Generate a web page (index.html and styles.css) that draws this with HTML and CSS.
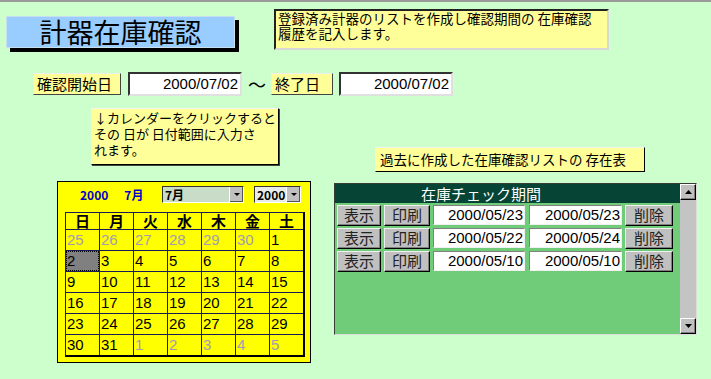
FILE: index.html
```html
<!DOCTYPE html>
<html lang="ja">
<head>
  <meta charset="UTF-8" />
  <title>計器在庫確認</title>
  <link rel="stylesheet" href="styles.css">
</head>
<body>
  <div class="top">
    <div class="title-box">計器在庫確認</div>
    <div class="note note-top">登録済み計器のリストを作成し確認期間の 在庫確認<br>履歴を記入します。</div>
  </div>

  <div class="dates">
    <div class="label label-start">確認開始日</div>
    <div class="field field-start">2000/07/02</div>
    <div class="wave">〜</div>
    <div class="label label-end">終了日</div>
    <div class="field field-end">2000/07/02</div>
  </div>

  <div class="main">
    <div class="left-col">
      <div class="hint">↓カレンダーをクリックすると<br>その 日が 日付範囲に入力さ<br>れます。</div>

      <div class="calendar">
        <div class="cal-head">
          <div class="cal-title"><span>2000</span><span>7月</span></div>
          <div class="combo combo-month"><span class="combo-text">7月</span><span class="combo-btn"></span></div>
          <div class="combo combo-year"><span class="combo-text">2000</span><span class="combo-btn"></span></div>
        </div>
        <div class="cal-grid">
          <div class="dow">日</div><div class="dow">月</div><div class="dow">火</div><div class="dow">水</div><div class="dow">木</div><div class="dow">金</div><div class="dow">土</div>
          <div class="day other">25</div><div class="day other">26</div><div class="day other">27</div><div class="day other">28</div><div class="day other">29</div><div class="day other">30</div><div class="day">1</div>
          <div class="day selected">2</div><div class="day">3</div><div class="day">4</div><div class="day">5</div><div class="day">6</div><div class="day">7</div><div class="day">8</div>
          <div class="day">9</div><div class="day">10</div><div class="day">11</div><div class="day">12</div><div class="day">13</div><div class="day">14</div><div class="day">15</div>
          <div class="day">16</div><div class="day">17</div><div class="day">18</div><div class="day">19</div><div class="day">20</div><div class="day">21</div><div class="day">22</div>
          <div class="day">23</div><div class="day">24</div><div class="day">25</div><div class="day">26</div><div class="day">27</div><div class="day">28</div><div class="day">29</div>
          <div class="day">30</div><div class="day">31</div><div class="day other">1</div><div class="day other">2</div><div class="day other">3</div><div class="day other">4</div><div class="day other">5</div>
        </div>
      </div>
    </div>

    <div class="right-col">
      <div class="note note-past">過去に作成した在庫確認リストの 存在表</div>

      <div class="panel">
        <div class="panel-body">
          <div class="panel-head">在庫チェック期間</div>

          <div class="row">
            <div class="btn btn-show">表示</div>
            <div class="btn btn-print">印刷</div>
            <div class="cell cell-from">2000/05/23</div>
            <div class="cell cell-to">2000/05/23</div>
            <div class="btn btn-del">削除</div>
          </div>
          <div class="row">
            <div class="btn btn-show">表示</div>
            <div class="btn btn-print">印刷</div>
            <div class="cell cell-from">2000/05/22</div>
            <div class="cell cell-to">2000/05/24</div>
            <div class="btn btn-del">削除</div>
          </div>
          <div class="row">
            <div class="btn btn-show">表示</div>
            <div class="btn btn-print">印刷</div>
            <div class="cell cell-from">2000/05/10</div>
            <div class="cell cell-to">2000/05/10</div>
            <div class="btn btn-del">削除</div>
          </div>
        </div>

        <div class="scrollbar">
          <div class="sb-btn sb-up"><svg width="7" height="4" viewBox="0 0 7 4"><path d="M3.5 0 L7 4 L0 4 Z" fill="#000"/></svg></div>
          <div class="sb-track"></div>
          <div class="sb-btn sb-down"><svg width="7" height="4" viewBox="0 0 7 4"><path d="M0 0 L7 0 L3.5 4 Z" fill="#000"/></svg></div>
        </div>
      </div>
    </div>
  </div>
</body>
</html>
```

FILE: styles.css
```css
body {
  margin: 0;
  height: 377px;
  background-color: #ccffcc;
  border-top: 2px solid #9a9a9a;
  font-family: "Noto Sans CJK JP", "Liberation Sans", sans-serif;
  color: #000;
  overflow: hidden;
}

/* top row */
.top {
  display: flex;
  align-items: flex-start;
  padding-left: 6px;
}

.title-box {
  margin-top: 14px;
  width: 229px;
  height: 32px;
  box-sizing: border-box;
  background-color: #99ccff;
  border: 1px solid #c8dff0;
  box-shadow: 4px 4px 0 #000;
  text-align: center;
  font-size: 27px;
  line-height: 30px;
}

.note {
  background-color: #ffff99;
  box-sizing: border-box;
  white-space: nowrap;
  overflow: hidden;
}

.note-top {
  margin-top: 7px;
  margin-left: 39px;
  width: 335px;
  height: 41px;
  border-style: solid;
  border-width: 2px;
  border-color: #222 #d8d8d8 #d8d8d8 #222;
  padding: 0 2px;
  font-size: 13.5px;
  line-height: 15px;
}

/* date range row */
.dates {
  display: flex;
  align-items: center;
  margin-top: 22px;
  padding-left: 33px;
  height: 24px;
}

.label {
  height: 22px;
  box-sizing: border-box;
  background-color: #ffff99;
  border: 1px solid;
  border-color: #f0f0f0 #444 #444 #f0f0f0;
  font-size: 15px;
  line-height: 20px;
  padding-left: 3px;
}

.label-start {
  width: 88px;
}

.label-end {
  width: 62px;
}

.field {
  height: 24px;
  box-sizing: border-box;
  background-color: #fff;
  border: 2px solid;
  border-color: #333 #e0e0e0 #e0e0e0 #333;
  font-family: "Liberation Sans", sans-serif;
  font-size: 15px;
  line-height: 20px;
  text-align: right;
  padding-right: 2px;
}

.field-start {
  width: 114px;
  margin-left: 7px;
}

.field-end {
  width: 114px;
  margin-left: 6px;
}

.wave {
  width: 28px;
  text-align: center;
  font-size: 18px;
  line-height: 24px;
  margin-left: 1px;
}

/* main area */
.main {
  display: flex;
  margin-top: 12px;
}

.left-col {
  padding-left: 57px;
  width: 254px;
}

.hint {
  margin-left: 34px;
  width: 188px;
  height: 57px;
  box-sizing: border-box;
  background-color: #ffff99;
  border: 1px solid;
  border-color: #f4f4f4 #000 #000 #f4f4f4;
  box-shadow: 1px 1px 0 #444;
  padding: 1px 2px;
  font-size: 13px;
  line-height: 16px;
  white-space: nowrap;
  overflow: hidden;
}

/* calendar */
.calendar {
  margin-top: 16px;
  width: 254px;
  height: 182px;
  box-sizing: border-box;
  background-color: #ffff00;
  border: 1px solid #000;
  padding: 4px 0 0 7px;
}

.cal-head {
  display: flex;
  align-items: center;
  height: 17px;
}

.cal-title {
  width: 82px;
  margin-left: 15px;
  display: flex;
  gap: 16px;
  color: #0000cc;
  font-weight: bold;
  font-size: 12px;
  line-height: 17px;
}

.combo {
  display: flex;
  height: 17px;
  box-sizing: border-box;
  border: 1px solid;
  border-color: #333 #fff #fff #333;
  font-weight: bold;
  font-size: 12px;
  line-height: 15px;
}

.combo-month {
  width: 82px;
  margin-right: 10px;
  background-color: #c8dcc8;
}

.combo-year {
  width: 47px;
  background-color: #e8ece8;
}

.combo-text {
  flex: 1;
  padding-left: 2px;
}

.combo-btn {
  width: 13px;
  background-color: #c0c0c0;
  border-left: 1px solid #fff;
  box-shadow: inset -1px -1px 0 #555;
  position: relative;
}

.combo-btn::after {
  content: "";
  position: absolute;
  left: 4px;
  top: 6px;
  border-left: 3px solid transparent;
  border-right: 3px solid transparent;
  border-top: 3px solid #000;
}

.cal-grid {
  margin-top: 9px;
  display: grid;
  grid-template-columns: repeat(7, 33px);
  grid-template-rows: 16px repeat(6, 20px);
  gap: 1px;
  width: max-content;
  background-color: #1a1a5a;
  border: 1px solid #1a1a5a;
  border-right: 2px solid #000;
  border-bottom: 2px solid #000;
}

.dow {
  background-color: #ffff00;
  text-align: center;
  font-weight: bold;
  font-size: 15px;
  line-height: 16px;
}

.day {
  background-color: #ffff00;
  font-family: "Liberation Sans", sans-serif;
  font-size: 15px;
  line-height: 20px;
  padding-left: 1px;
}

.day.other {
  color: #a09cb4;
}

.day.selected {
  background-color: #808080;
  outline: 1px dotted #000;
  outline-offset: -1px;
}

/* right column */
.right-col {
  margin-left: 23px;
}

.note-past {
  margin-top: 39px;
  margin-left: 41px;
  width: 270px;
  height: 25px;
  border: 1px solid;
  border-color: #f4f4f4 #000 #000 #f4f4f4;
  padding-left: 4px;
  line-height: 22px;
  font-size: 13.5px;
}

.panel {
  margin-top: 11px;
  width: 363px;
  height: 152px;
  box-sizing: border-box;
  display: flex;
  background-color: #70cc78;
  border: 1px solid #3a3a3a;
  border-right-color: #ddd;
  border-bottom-color: #ddd;
}

.panel-body {
  flex: 1;
}

.panel-head {
  height: 19px;
  background-color: #064436;
  color: #fff;
  font-size: 15px;
  line-height: 19px;
  padding-left: 86px;
  margin-bottom: 2px;
}

.row {
  display: flex;
  height: 20px;
  padding-left: 2px;
  margin-bottom: 3px;
}

.btn {
  height: 21px;
  box-sizing: border-box;
  background-color: #c0c0c0;
  border: 1px solid;
  border-color: #f0f0f0 #000 #000 #f0f0f0;
  box-shadow: inset -1px -1px 0 #808080;
  text-align: center;
  font-size: 15px;
  line-height: 18px;
  color: #222;
}

.btn-show {
  width: 44px;
}

.btn-print {
  width: 46px;
  margin-left: 3px;
}

.btn-del {
  width: 48px;
  margin-left: 3px;
}

.cell {
  height: 20px;
  box-sizing: border-box;
  background-color: #fff;
  border: 1px solid;
  border-color: #808080 #f0f0f0 #f0f0f0 #808080;
  font-family: "Liberation Sans", sans-serif;
  font-size: 15px;
  line-height: 18px;
  text-align: right;
  padding-right: 1px;
}

.cell-from {
  width: 92px;
  margin-left: 3px;
}

.cell-to {
  width: 93px;
  margin-left: 4px;
}

/* scrollbar */
.scrollbar {
  width: 16px;
  display: flex;
  flex-direction: column;
  background-color: #c4c4c4;
}

.sb-track {
  flex: 1;
}

.sb-btn {
  height: 16px;
  box-sizing: border-box;
  background-color: #c0c0c0;
  border: 1px solid;
  border-color: #fff #000 #000 #fff;
  box-shadow: inset -1px -1px 0 #808080;
  display: flex;
  align-items: center;
  justify-content: center;
}
```
